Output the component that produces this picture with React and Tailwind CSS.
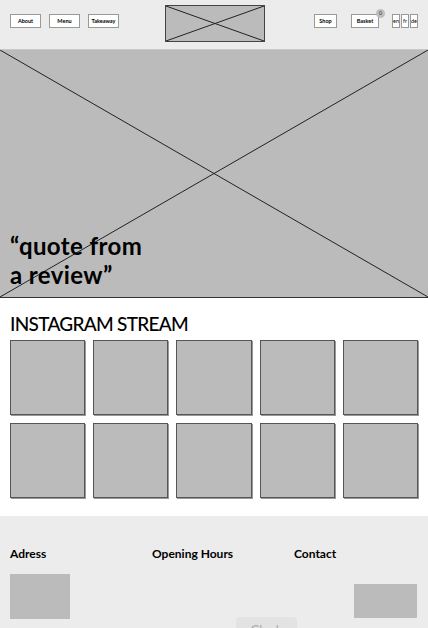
const Cross = ({ className = "" }) => (
  <svg className={`absolute inset-0 h-full w-full ${className}`} preserveAspectRatio="none" viewBox="0 0 100 100">
    <line x1="0" y1="0" x2="100" y2="100" stroke="#222" strokeWidth="1" vectorEffect="non-scaling-stroke" />
    <line x1="100" y1="0" x2="0" y2="100" stroke="#222" strokeWidth="1" vectorEffect="non-scaling-stroke" />
  </svg>
)

const NavButton = ({ children, className = "" }) => (
  <div className={`flex h-[14px] items-center justify-center border border-[#999] bg-white text-[5.5px] font-bold text-black ${className}`}>
    {children}
  </div>
)

export default function App() {
  const tiles = Array.from({ length: 10 })

  return (
    <div className="min-h-[628px] bg-white font-['Lato','Liberation_Sans',sans-serif] text-black">
      <header className="flex h-[50px] items-start border-b border-[#c8c8c8] bg-[#ececec] px-[10px] pt-[5px]">
        <div className="mt-[9px] flex w-[155px] gap-[8px]">
          <NavButton className="w-[31px]">About</NavButton>
          <NavButton className="w-[31px]">Menu</NavButton>
          <NavButton className="w-[31px]">Takeaway</NavButton>
        </div>
        <div className="relative h-[37px] w-[100px] border border-[#444] bg-[#bbb]">
          <Cross />
        </div>
        <div className="ml-auto mt-[9px] flex items-center">
          <NavButton className="w-[23px]">Shop</NavButton>
          <div className="relative ml-[14px]">
            <NavButton className="w-[28px]">Basket</NavButton>
            <span className="absolute -right-[6px] -top-[5px] flex h-[9px] w-[9px] items-center justify-center rounded-full bg-[#bdbdbd] text-[5px] text-[#333]">0</span>
          </div>
          <div className="ml-[13px] flex gap-[1px]">
            <NavButton className="w-[8px] text-[3px] font-normal">en</NavButton>
            <NavButton className="w-[8px] text-[3px] font-normal">fr</NavButton>
            <NavButton className="w-[8px] text-[3px] font-normal">de</NavButton>
          </div>
        </div>
      </header>

      <section className="relative flex h-[248px] items-end border-b border-[#333] bg-[#bbb] px-[10px] pb-[8px]">
        <Cross />
        <h1 className="relative text-[24px] font-bold leading-[29px] tracking-[0.4px]">
          “quote from
          <br />
          a review”
        </h1>
      </section>

      <section className="px-[10px] pb-[18px] pt-[14px]">
        <h2 className="text-[19px] font-medium leading-[24px] tracking-[-0.7px]">INSTAGRAM STREAM</h2>
        <div className="mt-[4px] grid grid-cols-5 gap-[8px]">
          {tiles.map((_, i) => (
            <div key={i} className="h-[75px] border border-[#555] bg-[#bbb] shadow-[1px_1px_0_#999]" />
          ))}
        </div>
      </section>

      <footer className="relative h-[112px] bg-[#ececec] pl-[10px]">
        <div className="grid grid-cols-[142px_142px_1fr] pt-[30px]">
          <div>
            <h3 className="text-[12px] font-bold leading-[16px]">Adress</h3>
            <div className="mt-[12px] h-[45px] w-[60px] bg-[#bbb]" />
          </div>
          <h3 className="text-[12px] font-bold leading-[16px]">Opening Hours</h3>
          <div className="flex flex-col">
            <h3 className="text-[12px] font-bold leading-[16px]">Contact</h3>
            <div className="ml-auto mr-[11px] mt-[22px] h-[34px] w-[63px] bg-[#bbb]" />
          </div>
        </div>
        <div className="absolute left-[236px] top-[101px] h-[20px] w-[61px] rounded-t-[4px] bg-[#e3e3e3] pt-[4px] text-center text-[13px] text-[#aaa]">
          Clock
        </div>
      </footer>
    </div>
  )
}
